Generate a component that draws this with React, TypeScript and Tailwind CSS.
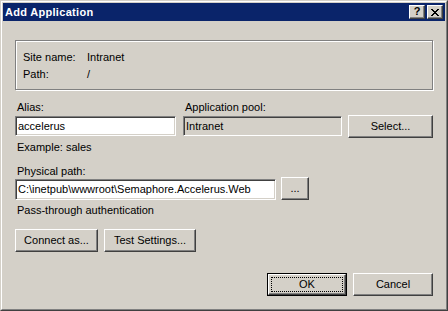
import React from "react";

const font = { fontFamily: '"Liberation Sans", Arial, sans-serif' };

function Btn({ w, h = 23, children, className = "" }: { w: number; h?: number; children: React.ReactNode; className?: string }) {
  return (
    <div
      className={`flex items-center justify-center border border-t-white border-l-white border-r-[#404040] border-b-[#404040] shadow-[inset_-1px_-1px_#808080] bg-[#d4d0c8] text-[11px] text-black ${className}`}
      style={{ width: w, height: h }}
    >
      {children}
    </div>
  );
}

function Field({ w, h = 20, value, disabled = false }: { w: number; h?: number; value: string; disabled?: boolean }) {
  return (
    <div
      className={`flex items-center border border-t-[#808080] border-l-[#808080] border-r-white border-b-white shadow-[inset_1px_1px_#404040,inset_-1px_-1px_#d4d0c8] pl-[2px] text-[11px] text-black whitespace-nowrap overflow-hidden ${disabled ? "bg-[#d4d0c8]" : "bg-white"}`}
      style={{ width: w, height: h }}
    >
      {value}
    </div>
  );
}

export default function App() {
  return (
    <div style={font} className="w-[448px] h-[311px] bg-[#d4d0c8] border border-t-[#d4d0c8] border-l-[#d4d0c8] border-r-[#404040] border-b-[#404040] text-black text-[11px] leading-[13px]">
      <div className="h-full border border-t-white border-l-white border-r-[#808080] border-b-[#808080] p-px flex flex-col">
        {/* Title bar */}
        <div className="h-[18px] bg-[#0a246a] flex items-center pl-[2px] pr-[2px]">
          <div className="text-white font-bold text-[11px] tracking-[0.3px] flex-1">Add Application</div>
          <div className="flex gap-[2px]">
            <div className="w-[16px] h-[14px] flex items-center justify-center border border-t-white border-l-white border-r-[#404040] border-b-[#404040] shadow-[inset_-1px_-1px_#808080] bg-[#d4d0c8] text-[11px] font-bold leading-none pb-px">?</div>
            <div className="w-[16px] h-[14px] flex items-center justify-center border border-t-white border-l-white border-r-[#404040] border-b-[#404040] shadow-[inset_-1px_-1px_#808080] bg-[#d4d0c8]">
              <svg width="8" height="7" viewBox="0 0 8 7" shapeRendering="crispEdges">
                <path d="M0 0h2v1h-2zM6 0h2v1h-2zM1 1h2v1h-2zM5 1h2v1h-2zM2 2h4v1h-4zM3 3h2v1h-2zM2 4h4v1h-4zM1 5h2v1h-2zM5 5h2v1h-2zM0 6h2v1h-2zM6 6h2v1h-2z" fill="#000" />
              </svg>
            </div>
          </div>
        </div>

        {/* Client */}
        <div className="flex flex-col px-[12px]">
          {/* Group box */}
          <div className="mt-[19px] h-[50px] border border-[#808080] shadow-[inset_1px_1px_white,1px_1px_white] pt-[8px] pl-[7px] leading-[17px]">
            <div className="flex">
              <div className="w-[64px]">Site name:</div>
              <div>Intranet</div>
            </div>
            <div className="flex">
              <div className="w-[64px]">Path:</div>
              <div>/</div>
            </div>
          </div>

          {/* Alias / pool row */}
          <div className="mt-[11px] h-[37px] flex">
            <div className="flex flex-col">
              <div className="pl-[2px] h-[13px]">Alias:</div>
              <div className="mt-[2px]">
                <Field w={161} value="accelerus" />
              </div>
            </div>
            <div className="flex flex-col ml-[7px]">
              <div className="pl-[2px] h-[13px]">Application pool:</div>
              <div className="mt-[2px]">
                <Field w={159} value="Intranet" disabled />
              </div>
            </div>
            <div className="ml-[6px] mt-[14px]">
              <Btn w={85}>Select...</Btn>
            </div>
          </div>

          <div className="mt-[3px] pl-[2px] h-[13px]">Example: sales</div>
          <div className="mt-[11px] pl-[2px] h-[13px]">Physical path:</div>

          <div className="flex h-[23px] mt-[-1px]">
            <div className="mt-[2px]">
              <Field w={261} h={21} value="C:\inetpub\wwwroot\Semaphore.Accelerus.Web" />
            </div>
            <div className="ml-[5px]">
              <Btn w={28}>...</Btn>
            </div>
          </div>

          <div className="mt-[4px] pl-[2px] h-[13px]">Pass-through authentication</div>

          <div className="mt-[12px] flex gap-[6px]">
            <Btn w={83}>Connect as...</Btn>
            <Btn w={92}>Test Settings...</Btn>
          </div>

          <div className="mt-[21px] flex justify-end gap-[6px]">
            <div className="w-[80px] h-[23px] border border-black">
              <div className="w-full h-full flex items-center justify-center border border-t-white border-l-white border-r-[#404040] border-b-[#404040] shadow-[inset_-1px_-1px_#808080] p-[2px]">
                <div className="w-full h-full flex items-center justify-center border border-dotted border-black">OK</div>
              </div>
            </div>
            <Btn w={80}>Cancel</Btn>
          </div>
        </div>
      </div>
    </div>
  );
}
